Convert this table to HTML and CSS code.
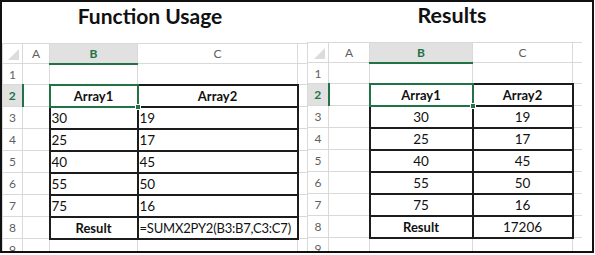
FILE: index.html
```html
<!DOCTYPE html>
<html>
<head>
<meta charset="utf-8">
<link rel="stylesheet" href="styles.css">
</head>
<body>
<div class="frame">
  <section class="pane pane-left">
    <h1 class="title">Function Usage</h1>
    <table class="sheet">
      <colgroup><col class="c-rh"><col class="c-a"><col class="c-b"><col class="c-c"><col class="c-d"></colgroup>
      <tr class="hdr"><th class="corner"><span class="tri"></span></th><th>A</th><th class="sel">B</th><th>C</th><th class="last"></th></tr>
      <tr><th class="rh">1</th><td></td><td></td><td></td><td class="last"></td></tr>
      <tr><th class="rh sel">2</th><td></td><td class="tb head active">Array1<span class="handle"></span></td><td class="tb head">Array2</td><td class="last"></td></tr>
      <tr><th class="rh">3</th><td></td><td class="tb">30</td><td class="tb">19</td><td class="last"></td></tr>
      <tr><th class="rh">4</th><td></td><td class="tb">25</td><td class="tb">17</td><td class="last"></td></tr>
      <tr><th class="rh">5</th><td></td><td class="tb">40</td><td class="tb">45</td><td class="last"></td></tr>
      <tr><th class="rh">6</th><td></td><td class="tb">55</td><td class="tb">50</td><td class="last"></td></tr>
      <tr><th class="rh">7</th><td></td><td class="tb">75</td><td class="tb">16</td><td class="last"></td></tr>
      <tr><th class="rh">8</th><td></td><td class="tb head">Result</td><td class="tb formula">=SUMX2PY2(B3:B7,C3:C7)</td><td class="last"></td></tr>
      <tr><th class="rh">9</th><td></td><td></td><td></td><td class="last"></td></tr>
    </table>
  </section>
  <section class="pane pane-right">
    <h1 class="title">Results</h1>
    <table class="sheet centered">
      <colgroup><col class="r-rh"><col class="r-a"><col class="r-b"><col class="r-c"><col class="r-d"></colgroup>
      <tr class="hdr"><th class="corner"><span class="tri"></span></th><th>A</th><th class="sel">B</th><th>C</th><th class="last"></th></tr>
      <tr><th class="rh">1</th><td></td><td></td><td></td><td class="last"></td></tr>
      <tr><th class="rh sel">2</th><td></td><td class="tb head active">Array1<span class="handle"></span></td><td class="tb head">Array2</td><td class="last"></td></tr>
      <tr><th class="rh">3</th><td></td><td class="tb">30</td><td class="tb">19</td><td class="last"></td></tr>
      <tr><th class="rh">4</th><td></td><td class="tb">25</td><td class="tb">17</td><td class="last"></td></tr>
      <tr><th class="rh">5</th><td></td><td class="tb">40</td><td class="tb">45</td><td class="last"></td></tr>
      <tr><th class="rh">6</th><td></td><td class="tb">55</td><td class="tb">50</td><td class="last"></td></tr>
      <tr><th class="rh">7</th><td></td><td class="tb">75</td><td class="tb">16</td><td class="last"></td></tr>
      <tr><th class="rh">8</th><td></td><td class="tb head">Result</td><td class="tb">17206</td><td class="last"></td></tr>
      <tr><th class="rh">9</th><td></td><td></td><td></td><td class="last"></td></tr>
    </table>
  </section>
</div>
</body>
</html>
```

FILE: styles.css
```css
* { box-sizing: border-box; }
body { margin: 0; background: #fff; font-family: Lato, "Open Sans", sans-serif; }

.frame {
  width: 594px;
  height: 253px;
  border: 2px solid #111;
  display: flex;
  overflow: hidden;
  background: #fff;
}
.pane { display: flex; flex-direction: column; overflow: hidden; }
.pane-left { width: 305px; flex: none; }
.pane-right { flex: 1; }

.title {
  margin: 0;
  height: 41px;
  flex: none;
  padding-top: 1px;
  font-size: 21px;
  line-height: 25px;
  font-weight: 700;
  text-align: center;
  color: #111;
}
.pane-left .title { padding-right: 9px; }
.pane-right .title { height: 40px; padding-left: 5px; font-size: 21.5px; }

.sheet {
  border-collapse: collapse;
  table-layout: fixed;
  flex: none;
}
.pane-left .sheet { width: 305px; }
.pane-right .sheet { width: 274px; }

.c-rh { width: 20px; }
.c-a { width: 27px; }
.c-b { width: 88px; }
.c-c { width: 160px; }
.c-d { width: 10px; }

.r-rh { width: 21px; }
.r-a { width: 41px; }
.r-b { width: 103px; }
.r-c { width: 100px; }
.r-d { width: 9px; }

.sheet th, .sheet td {
  border: 1px solid #d9d9d9;
  padding: 0 1px;
  height: 22px;
  font-size: 13.5px;
  color: #111;
  white-space: nowrap;
  overflow: visible;
}
.sheet th {
  font-weight: 400;
  font-size: 12px;
  color: #5f5f5f;
  text-align: center;
}
.sheet .hdr th { height: 20px; }
.sheet tr:nth-child(2) > * { height: 21px; }
.sheet th.last, .sheet td.last { border-right: none; }

.sheet .corner {
  text-align: right;
  vertical-align: bottom;
  padding: 0 3px 3px 0;
  line-height: 0;
}
.tri {
  display: inline-block;
  width: 0;
  height: 0;
  border-left: 11px solid transparent;
  border-bottom: 11px solid #dcdcdc;
}

.sheet .hdr th.sel {
  background: #e1e1e1;
  color: #217346;
  font-weight: 700;
  border-bottom: 2px solid #217346;
}
.sheet th.rh.sel {
  background: #e1e1e1;
  color: #217346;
  font-weight: 700;
  border-right: 2px solid #217346;
}

.sheet td.tb {
  border: 2px solid #1c1c1c;
  text-align: left;
}
.sheet td.tb.head { text-align: center; font-weight: 700; font-size: 13px; }
.sheet td.formula { font-size: 13px; letter-spacing: -0.2px; }
.centered td.tb { text-align: center; }

.sheet td.active {
  border: 2px solid #217346;
  position: relative;
}
.handle {
  position: absolute;
  right: -4px;
  bottom: -4px;
  width: 6px;
  height: 6px;
  background: #217346;
  border: 1px solid #fff;
  z-index: 2;
}
```
